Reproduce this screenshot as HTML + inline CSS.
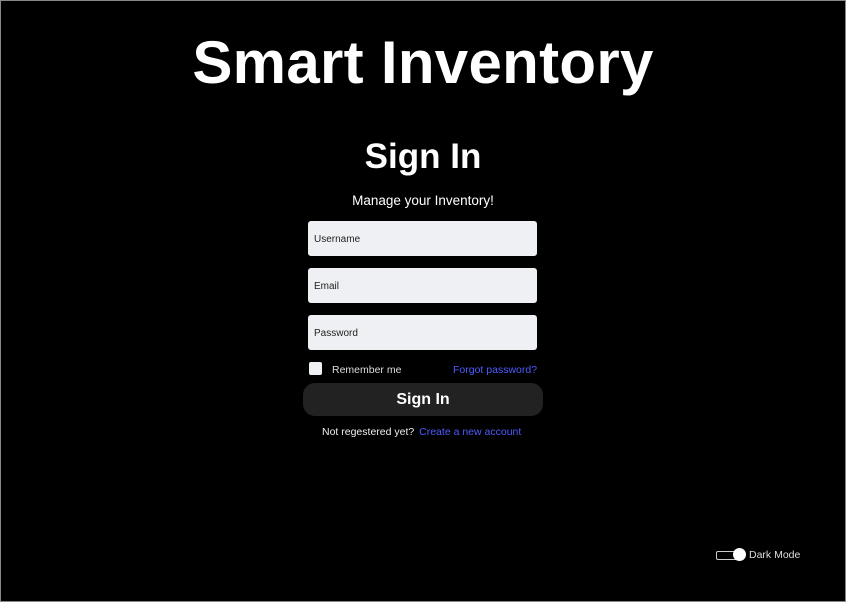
<!DOCTYPE html>
<html><head><style>
body{margin:0;width:846px;height:602px;background:#000;font-family:"Liberation Sans",sans-serif;color:#fff;position:relative;overflow:hidden}
.frame{position:absolute;left:0;top:0;width:844px;height:600px;border:1px solid #888}
.a{position:absolute}
h1{position:absolute;left:0;width:846px;text-align:center;top:28px;margin:0;font-size:60px;font-weight:bold;letter-spacing:0.3px}
h2{position:absolute;left:0;width:846px;text-align:center;top:137px;margin:0;font-size:35px;font-weight:bold}
.sub{left:0;width:846px;text-align:center;top:193px;font-size:13.5px}
.in{left:308px;width:229px;height:35px;background:#eef0f3;border-radius:3px;color:#222;font-size:10px;line-height:37px;text-indent:6px}
.btn{left:303px;top:383px;width:240px;height:33px;background:#222;border-radius:12px;text-align:center;line-height:34px;font-size:16px;font-weight:bold}
</style></head><body>
<div class="frame"></div>
<h1>Smart Inventory</h1>
<h2>Sign In</h2>
<div class="a sub">Manage your Inventory!</div>
<div class="a in" style="top:221px">Username</div>
<div class="a in" style="top:268px">Email</div>
<div class="a in" style="top:315px">Password</div>
<div class="a" style="left:309px;top:362px;width:13px;height:13px;background:#eef0f3;border-radius:2px"></div>
<div class="a" style="left:332px;top:364px;font-size:10.5px;color:#ddd">Remember me</div>
<div class="a" style="left:453px;top:364px;font-size:10.5px;color:#4f5bff">Forgot password?</div>
<div class="a btn">Sign In</div>
<div class="a" style="left:322px;top:426px;font-size:10.5px;color:#eee">Not regestered yet? <span style="color:#4f5bff;margin-left:2px">Create a new account</span></div>
<div class="a" style="left:716px;top:551px;width:26px;height:7px;border:1px solid #ccc;border-radius:2px"></div>
<div class="a" style="left:733px;top:548px;width:13px;height:13px;background:#fff;border-radius:50%"></div>
<div class="a" style="left:749px;top:549px;font-size:10.5px;color:#ddd">Dark Mode</div>
</body></html>
